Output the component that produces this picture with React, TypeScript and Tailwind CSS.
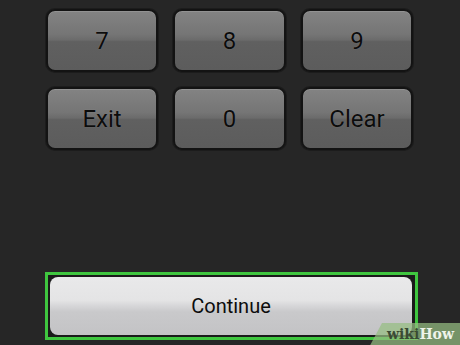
import React from "react";

const keyCls =
  "h-[63px] rounded-[9px] border-2 border-[#131313] bg-[linear-gradient(to_bottom,#838383_0%,#757575_40%,#6b6b6b_49%,#606060_52%,#5c5c5c_100%)] shadow-[inset_0_1px_0_rgba(255,255,255,0.12),0_0_0_1px_#1c1c1c] flex items-center justify-center text-[24px] text-[#0c0c0c] [text-shadow:0_0_1px_rgba(255,255,255,0.25)]";

function Key({ label }: { label: string }) {
  return <div className={keyCls}>{label}</div>;
}

export default function App() {
  const keys = ["7", "8", "9", "Exit", "0", "Clear"];
  return (
    <div
      className="relative w-[460px] h-[345px] overflow-hidden bg-[#262626] flex flex-col"
      style={{ fontFamily: "Roboto, 'Open Sans', sans-serif" }}
    >
      <div className="ml-[46px] mt-[9px] w-[368px] grid grid-cols-[112px_113px_112px] gap-x-[15px] gap-y-[15px]">
        {keys.map((k) => (
          <Key key={k} label={k} />
        ))}
      </div>
      <div className="ml-[45px] mt-[122px] w-[373px] h-[68px] border-[3px] border-[#3fc63f] bg-[#1a1a1a] p-[2px] pr-[3px]">
        <div className="h-full rounded-[8px] bg-[linear-gradient(to_bottom,#e9e9ea_0%,#e4e4e5_40%,#d6d6d8_50%,#c9c9cb_60%,#c3c3c5_100%)] flex items-center justify-center text-[20px] text-[#0c0c0c]">
          Continue
        </div>
      </div>
      <div className="absolute left-[366px] top-[323px] w-[110px] h-[30px] bg-[rgba(150,190,130,0.72)] [clip-path:polygon(16px_0,100%_0,100%_100%,0_100%)]" />
      <div
        className="absolute left-[387px] top-[325px] text-[14px] font-bold leading-[18px]"
        style={{ fontFamily: "'DejaVu Serif', 'Liberation Serif', serif" }}
      >
        <span className="text-[#3a4a33]">wiki</span>
        <span className="text-[#eef3ea]">How</span>
      </div>
    </div>
  );
}
